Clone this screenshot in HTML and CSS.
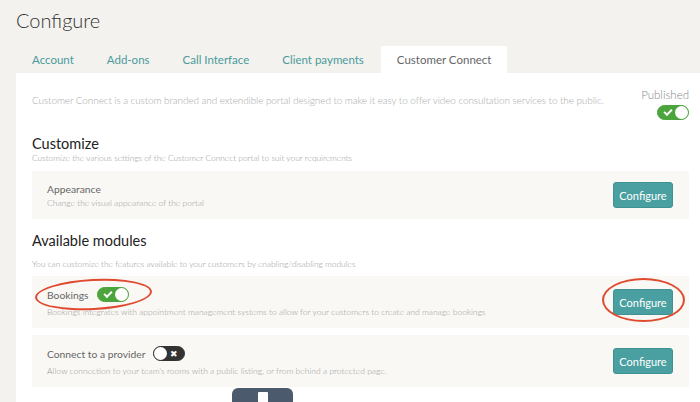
FILE: index.html
```html
<!DOCTYPE html>
<html lang="en">
<head>
  <meta charset="UTF-8" />
  <title>Configure</title>
  <link rel="stylesheet" href="styles.css">
</head>
<body>
  <h1>Configure</h1>

  <nav class="tabs">
    <a class="tab">Account</a>
    <a class="tab">Add-ons</a>
    <a class="tab">Call Interface</a>
    <a class="tab">Client payments</a>
    <a class="tab active">Customer Connect</a>
  </nav>

  <div class="panel">
    <div class="intro">
      <p class="intro-text">Customer Connect is a custom branded and extendible portal designed to make it easy to offer video consultation services to the public.</p>
      <div class="published">
        <span>Published</span>
        <span class="toggle on"><span class="knob"></span></span>
      </div>
    </div>

    <h2 class="customize-title">Customize</h2>
    <p class="section-sub">Customize the various settings of the Customer Connect portal to suit your requirements</p>

    <div class="card">
      <div class="card-info">
        <div class="card-title">Appearance</div>
        <div class="card-sub">Change the visual appearance of the portal</div>
      </div>
      <button class="btn">Configure</button>
    </div>

    <h2 class="modules-title">Available modules</h2>
    <p class="section-sub modules-sub">You can customize the features available to your customers by enabling/disabling modules</p>

    <div class="card module">
      <span class="ring ring-toggle"></span>
      <div class="card-info">
        <div class="card-title">Bookings <span class="toggle on"><span class="knob"></span></span></div>
        <div class="card-sub">Bookings integrates with appointment management systems to allow for your customers to create and manage bookings</div>
      </div>
      <button class="btn">Configure</button>
      <span class="ring ring-btn"></span>
    </div>

    <div class="card module">
      <div class="card-info">
        <div class="card-title">Connect to a provider <span class="toggle off"><span class="knob"></span></span></div>
        <div class="card-sub">Allow connection to your team's rooms with a public listing, or from behind a protected page.</div>
      </div>
      <button class="btn">Configure</button>
    </div>
  </div>

  <div class="float-tab"><span></span></div>
</body>
</html>
```

FILE: styles.css
```css
body {
  margin: 0;
  background: #f3f2ef;
  font-family: Lato, "Open Sans", sans-serif;
  color: #333;
  overflow: hidden;
  height: 402px;
  position: relative;
}
h1 {
  margin: 0;
  padding: 8px 0 0 16px;
  height: 38px;
  font-size: 20px;
  font-weight: 300;
  color: #333;
}
.tabs {
  display: flex;
  padding-left: 16px;
  height: 27px;
}
.tab {
  padding: 0 16px;
  line-height: 28px;
  font-size: 11.5px;
  color: #4a9a9b;
  margin-right: 1px;
}
.active {
  background: #fff;
  color: #666;
}
.panel {
  background: #fff;
  margin-left: 16px;
  padding: 12px 11px 20px 16px;
  min-height: 320px;
}
.intro {
  display: flex;
  justify-content: space-between;
  align-items: flex-start;
}
.intro-text {
  margin: 9px 0 0;
  font-size: 10px;
  letter-spacing: -0.1px;
  font-weight: 300;
  color: #aaa;
}
.published {
  display: flex;
  flex-direction: column;
  align-items: flex-end;
  font-size: 11.5px;
  font-weight: 300;
  color: #888;
  gap: 4px;
  margin-top: 3px;
}
.toggle {
  display: inline-flex;
  align-items: center;
  width: 32px;
  height: 15px;
  border-radius: 8px;
  box-sizing: border-box;
  position: relative;
  vertical-align: middle;
}
.toggle.on {
  background: #4ca43c;
  border: 1px solid #4ca43c;
  justify-content: flex-end;
}
.toggle.on::before {
  content: "";
  position: absolute;
  left: 6px;
  top: 3px;
  width: 6px;
  height: 3px;
  border-left: 2px solid #fff;
  border-bottom: 2px solid #fff;
  transform: rotate(-45deg);
}
.toggle.off {
  background: #333;
  border: 1px solid #333;
  justify-content: flex-start;
}
.toggle.off::after {
  content: "\2716";
  position: absolute;
  right: 6px;
  top: 0;
  line-height: 13px;
  font-size: 9px;
  color: #fff;
}
.knob {
  width: 13px;
  height: 13px;
  border-radius: 50%;
  background: #fff;
}
h2 {
  margin: 0;
  font-size: 14.5px;
  font-weight: 400;
  color: #222;
}
.customize-title {
  margin-top: 15px;
}
.section-sub {
  margin: 1px 0 0;
  font-size: 8.4px;
  font-weight: 300;
  color: #999;
}
.card {
  display: flex;
  align-items: center;
  justify-content: space-between;
  background: #f9f8f5;
  margin-top: 8px;
  height: 48px;
  padding: 0 16px 0 15px;
  position: relative;
}
.card-title {
  font-size: 10.3px;
  color: #666;
  display: flex;
  align-items: center;
  gap: 8px;
}
.card-sub {
  margin-top: 3px;
  font-size: 8.5px;
  font-weight: 300;
  color: #999;
}
.btn {
  background: #4a9fa0;
  color: #fff;
  border: 1px solid #3f9192;
  border-radius: 3px;
  font-family: inherit;
  font-size: 11px;
  width: 60px;
  height: 26px;
  padding: 0;
}
.modules-title {
  margin-top: 13px;
}
.modules-sub {
  margin-top: 10px;
}
.module {
  height: 52px;
  margin-top: 7px;
}
.module .card-sub {
  margin-top: 5px;
}
.ring {
  position: absolute;
  border: 2px solid #e04a2f;
  border-radius: 50%;
}
.ring-toggle {
  left: 3px;
  top: 3px;
  width: 113px;
  height: 27px;
  transform: rotate(-3deg);
}
.ring-btn {
  right: 4px;
  top: 2px;
  width: 79px;
  height: 40px;
}
.float-tab {
  position: absolute;
  left: 232px;
  top: 388px;
  width: 61px;
  height: 20px;
  background: #4c5a6e;
  border-radius: 6px 6px 0 0;
  display: flex;
  justify-content: center;
}
.float-tab span {
  margin-top: 4px;
  width: 10px;
  height: 14px;
  background: #fff;
  border-radius: 1px;
}
```
